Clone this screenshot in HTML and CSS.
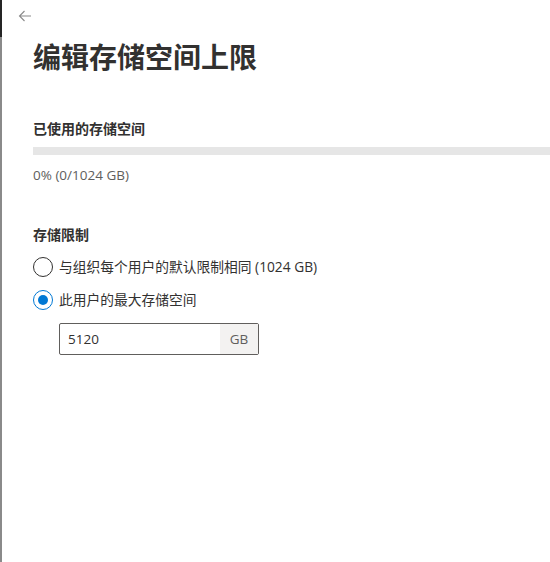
FILE: index.html
```html
<!DOCTYPE html>
<html lang="zh-CN">
<head>
    <meta charset="UTF-8">
    <title>编辑存储空间上限</title>
    <link rel="stylesheet" href="styles.css">
</head>
<body>
    <div class="page">
        <div class="edge">
            <div class="edge-top"></div>
            <div class="edge-rest"></div>
        </div>
        <div class="panel">
            <div class="topbar">
                <button class="back" aria-label="返回">
                    <svg width="14" height="14" viewBox="0 0 14 14">
                        <path d="M13 7H1.5M6.5 2L1.5 7l5 5" fill="none" stroke="#8a8a8a" stroke-width="1.1"/>
                    </svg>
                </button>
            </div>
            <h1 class="title">编辑存储空间上限</h1>

            <section class="usage">
                <h2 class="label">已使用的存储空间</h2>
                <div class="bar"><div class="bar-fill" style="width: 0%"></div></div>
                <p class="usage-text">0% (0/1024 GB)</p>
            </section>

            <section class="limit">
                <h2 class="label">存储限制</h2>
                <label class="radio">
                    <span class="circle"></span>
                    <span>与组织每个用户的默认限制相同 (1024 GB)</span>
                </label>
                <label class="radio checked">
                    <span class="circle"></span>
                    <span>此用户的最大存储空间</span>
                </label>
                <div class="field">
                    <span class="field-value">5120</span>
                    <span class="field-suffix">GB</span>
                </div>
            </section>
        </div>
    </div>
</body>
</html>
```

FILE: styles.css
```css
body {
    margin: 0;
    background-color: #fff;
    font-family: "Open Sans", "Noto Sans CJK SC", sans-serif;
    color: #323130;
}
.page {
    display: flex;
    min-height: 562px;
}
.edge {
    width: 2px;
    display: flex;
    flex-direction: column;
}
.edge-top {
    height: 37px;
    background-color: #252525;
}
.edge-rest {
    flex: 1;
    background-color: #8a8a8a;
}
.panel {
    flex: 1;
    padding-left: 31px;
}
.topbar {
    height: 30px;
}
.back {
    margin: 9px 0 0 -15px;
    padding: 0;
    border: none;
    background: none;
    width: 14px;
    height: 14px;
}
.title {
    margin: 8px 0 0;
    font-size: 28px;
    line-height: 38px;
    font-weight: 700;
    color: #323130;
}
.usage {
    margin-top: 43px;
}
.label {
    margin: 0;
    font-size: 14px;
    line-height: 20px;
    font-weight: 600;
    color: #323130;
}
.bar {
    margin-top: 8px;
    height: 8px;
    background-color: #e6e6e6;
}
.bar-fill {
    height: 100%;
    background-color: #0078d4;
}
.usage-text {
    margin: 10px 0 0;
    font-size: 13.5px;
    line-height: 20px;
    color: #605e5c;
}
.limit {
    margin-top: 40px;
}
.radio {
    display: flex;
    align-items: center;
    gap: 6px;
    margin-top: 13px;
    font-size: 13.75px;
    line-height: 20px;
    color: #323130;
}
.limit .label + .radio {
    margin-top: 12px;
}
.circle {
    width: 20px;
    height: 20px;
    box-sizing: border-box;
    border: 1px solid #323130;
    border-radius: 50%;
    display: flex;
    align-items: center;
    justify-content: center;
}
.checked .circle {
    border-color: #0078d4;
}
.checked .circle::after {
    content: "";
    width: 10px;
    height: 10px;
    border-radius: 50%;
    background-color: #0078d4;
}
.field {
    display: flex;
    width: 200px;
    height: 32px;
    box-sizing: border-box;
    margin: 13px 0 0 26px;
    border: 1px solid #605e5c;
    border-radius: 2px;
    font-size: 13.5px;
}
.field-value {
    flex: 1;
    padding-left: 8px;
    line-height: 30px;
    color: #323130;
}
.field-suffix {
    width: 38px;
    text-align: center;
    line-height: 30px;
    background-color: #f3f2f1;
    color: #605e5c;
}
```
